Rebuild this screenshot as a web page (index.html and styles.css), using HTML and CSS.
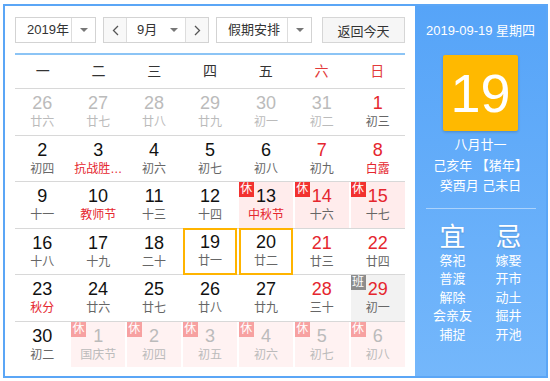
FILE: index.html
```html
<!DOCTYPE html>
<html>
  <head>
    <meta charset="utf-8">
    <title>万年历</title>
    <link rel="stylesheet" href="styles.css">
  </head>
  <body>
    <div class="calendar">
      <div class="main">
        <div class="toolbar">
          <div class="select year">
            <span class="value">2019年</span>
            <span class="drop"><i class="caret"></i></span>
          </div>
          <div class="select month">
            <span class="arrow">
              <svg width="7" height="11" viewBox="0 0 7 11"><path d="M6 1 1.5 5.5 6 10" fill="none" stroke="#555" stroke-width="1.3"/></svg>
            </span>
            <span class="value">9月</span>
            <span class="drop plain"><i class="caret"></i></span>
            <span class="arrow">
              <svg width="7" height="11" viewBox="0 0 7 11"><path d="M1 1 5.5 5.5 1 10" fill="none" stroke="#555" stroke-width="1.3"/></svg>
            </span>
          </div>
          <div class="select holiday">
            <span class="value">假期安排</span>
            <span class="drop"><i class="caret"></i></span>
          </div>
          <button class="today-btn">返回今天</button>
        </div>

        <div class="weekdays">
          <span>一</span><span>二</span><span>三</span><span>四</span><span>五</span>
          <span class="red">六</span><span class="red">日</span>
        </div>

        <div class="week">
          <div class="day other"><b>26</b><span>廿六</span></div>
          <div class="day other"><b>27</b><span>廿七</span></div>
          <div class="day other"><b>28</b><span>廿八</span></div>
          <div class="day other"><b>29</b><span>廿九</span></div>
          <div class="day other"><b>30</b><span>初一</span></div>
          <div class="day other"><b>31</b><span>初二</span></div>
          <div class="day weekend"><b>1</b><span>初三</span></div>
        </div>
        <div class="week">
          <div class="day"><b>2</b><span>初四</span></div>
          <div class="day fest"><b>3</b><span>抗战胜…</span></div>
          <div class="day"><b>4</b><span>初六</span></div>
          <div class="day"><b>5</b><span>初七</span></div>
          <div class="day"><b>6</b><span>初八</span></div>
          <div class="day weekend"><b>7</b><span>初九</span></div>
          <div class="day weekend fest"><b>8</b><span>白露</span></div>
        </div>
        <div class="week">
          <div class="day"><b>9</b><span>十一</span></div>
          <div class="day fest"><b>10</b><span>教师节</span></div>
          <div class="day"><b>11</b><span>十三</span></div>
          <div class="day"><b>12</b><span>十四</span></div>
          <div class="day rest fest"><i class="tag">休</i><b>13</b><span>中秋节</span></div>
          <div class="day rest weekend"><i class="tag">休</i><b>14</b><span>十六</span></div>
          <div class="day rest weekend"><i class="tag">休</i><b>15</b><span>十七</span></div>
        </div>
        <div class="week">
          <div class="day"><b>16</b><span>十八</span></div>
          <div class="day"><b>17</b><span>十九</span></div>
          <div class="day"><b>18</b><span>二十</span></div>
          <div class="day today"><b>19</b><span>廿一</span></div>
          <div class="day today"><b>20</b><span>廿二</span></div>
          <div class="day weekend"><b>21</b><span>廿三</span></div>
          <div class="day weekend"><b>22</b><span>廿四</span></div>
        </div>
        <div class="week">
          <div class="day fest"><b>23</b><span>秋分</span></div>
          <div class="day"><b>24</b><span>廿六</span></div>
          <div class="day"><b>25</b><span>廿七</span></div>
          <div class="day"><b>26</b><span>廿八</span></div>
          <div class="day"><b>27</b><span>廿九</span></div>
          <div class="day weekend"><b>28</b><span>三十</span></div>
          <div class="day work weekend"><i class="tag">班</i><b>29</b><span>初一</span></div>
        </div>
        <div class="week last">
          <div class="day"><b>30</b><span>初二</span></div>
          <div class="day other rest"><i class="tag">休</i><b>1</b><span>国庆节</span></div>
          <div class="day other rest"><i class="tag">休</i><b>2</b><span>初四</span></div>
          <div class="day other rest"><i class="tag">休</i><b>3</b><span>初五</span></div>
          <div class="day other rest"><i class="tag">休</i><b>4</b><span>初六</span></div>
          <div class="day other rest"><i class="tag">休</i><b>5</b><span>初七</span></div>
          <div class="day other rest"><i class="tag">休</i><b>6</b><span>初八</span></div>
        </div>
      </div>

      <div class="side">
        <div class="side-date">2019-09-19 星期四</div>
        <div class="big-day">19</div>
        <div class="lunar">
          <div>八月廿一</div>
          <div>己亥年 【猪年】</div>
          <div>癸酉月 己未日</div>
        </div>
        <div class="divider"></div>
        <div class="almanac">
          <div class="col">
            <h3>宜</h3>
            <div>祭祀</div>
            <div>普渡</div>
            <div>解除</div>
            <div>会亲友</div>
            <div>捕捉</div>
          </div>
          <div class="col">
            <h3>忌</h3>
            <div>嫁娶</div>
            <div>开市</div>
            <div>动土</div>
            <div>掘井</div>
            <div>开池</div>
          </div>
        </div>
      </div>
    </div>
  </body>
</html>
```

FILE: styles.css
```css
body {
  margin: 0;
  font-family: "Liberation Sans", "Noto Sans CJK SC", sans-serif;
  color: #333;
  background: #fff;
}
.calendar {
  display: flex;
  width: 545px;
  height: 374px;
  margin: 4px 0 0 3px;
  border: 2px solid #5ba6f6;
  box-sizing: border-box;
}
.main {
  width: 410px;
  padding: 11px 10px 0;
  box-sizing: border-box;
}

/* toolbar */
.toolbar {
  display: flex;
  height: 26px;
  margin-bottom: 10px;
}
.select {
  display: flex;
  height: 26px;
  border: 1px solid #d3d3d3;
  box-sizing: border-box;
  font-size: 13px;
  line-height: 24px;
  background: #fff;
}
.select .value {
  flex: 1;
}
.select .drop {
  width: 23px;
  border-left: 1px solid #ddd;
  display: flex;
  align-items: center;
  justify-content: center;
}
.select .drop.plain {
  border-left: none;
  width: 22px;
}
.caret {
  width: 0;
  height: 0;
  border-left: 4px solid transparent;
  border-right: 4px solid transparent;
  border-top: 4px solid #777;
}
.year {
  width: 81px;
  margin-right: 7px;
}
.year .value {
  padding-left: 11px;
}
.month {
  width: 106px;
  margin-right: 7px;
}
.month .value {
  padding-left: 10px;
}
.month .arrow {
  width: 22px;
  display: flex;
  align-items: center;
  justify-content: center;
  background: #f8f8f8;
}
.month .arrow:first-child {
  border-right: 1px solid #ddd;
}
.month .arrow:last-child {
  border-left: 1px solid #ddd;
}
.holiday {
  width: 96px;
  margin-right: 10px;
}
.holiday .value {
  padding-left: 11px;
}
.today-btn {
  width: 83px;
  height: 26px;
  border: 1px solid #d6d6d6;
  background: #f6f6f6;
  font-family: inherit;
  font-size: 13px;
  color: #333;
  padding: 0;
}

/* grid */
.weekdays {
  display: grid;
  grid-template-columns: repeat(7, 1fr);
  border-top: 2px solid #8cc4f5;
  border-bottom: 1px solid #d8d8d8;
  height: 33px;
  line-height: 33px;
  text-align: center;
  font-size: 14px;
  color: #333;
}
.red {
  color: #e23a3a;
}
.week {
  display: grid;
  grid-template-columns: repeat(7, 1fr);
  column-gap: 1.5px;
  height: 45.5px;
  border-bottom: 1px solid #d8d8d8;
}
.week.last {
  border-bottom: none;
}
.day {
  position: relative;
  text-align: center;
  padding-top: 4px;
  box-sizing: border-box;
}
.day b {
  display: block;
  font-weight: normal;
  font-size: 18px;
  line-height: 20px;
  color: #111;
}
.day span {
  display: block;
  font-size: 12px;
  line-height: 19px;
  color: #666;
}
.day.weekend b {
  color: #e5262e;
}
.day.fest span {
  color: #e5262e;
}
.day.other b,
.day.other span {
  color: #bbb;
}
.day.rest {
  background: #ffecec;
}
.day.other.rest {
  background: #fff2f2;
}
.day.work {
  background: #f2f2f2;
}
.day.today {
  box-shadow: inset 0 0 0 2px #ffb400;
  margin-top: -1px;
  height: 47px;
}
.tag {
  position: absolute;
  left: 0;
  top: 0;
  width: 15px;
  height: 15px;
  font-style: normal;
  font-size: 12px;
  line-height: 14px;
  color: #fff;
  background: #f2312f;
}
.other .tag {
  background: #f7a1a1;
}
.work .tag {
  background: #8d8d8d;
}

/* side panel */
.side {
  flex: 1;
  background: linear-gradient(#56a4f8, #74b7fb);
  color: #fff;
  text-align: center;
}
.side-date {
  font-size: 13px;
  line-height: 18px;
  margin-top: 16px;
}
.big-day {
  width: 75px;
  height: 76px;
  margin: 15px auto 0;
  background: #ffb900;
  border-radius: 2px;
  box-shadow: 0 1px 3px rgba(0, 0, 0, 0.2);
  font-size: 54px;
  line-height: 76px;
}
.lunar {
  margin-top: 4px;
  font-size: 13px;
  line-height: 20.5px;
}
.divider {
  height: 1px;
  margin: 11px 10px 0 11px;
  background: rgba(255, 255, 255, 0.45);
}
.almanac {
  display: flex;
  justify-content: center;
  margin-top: 13px;
}
.col {
  width: 56px;
  font-size: 13px;
  line-height: 18.5px;
}
.col h3 {
  margin: 0;
  font-size: 26px;
  line-height: 30px;
  font-weight: normal;
  text-shadow: 0 1px 2px rgba(0, 0, 0, 0.15);
}
```
